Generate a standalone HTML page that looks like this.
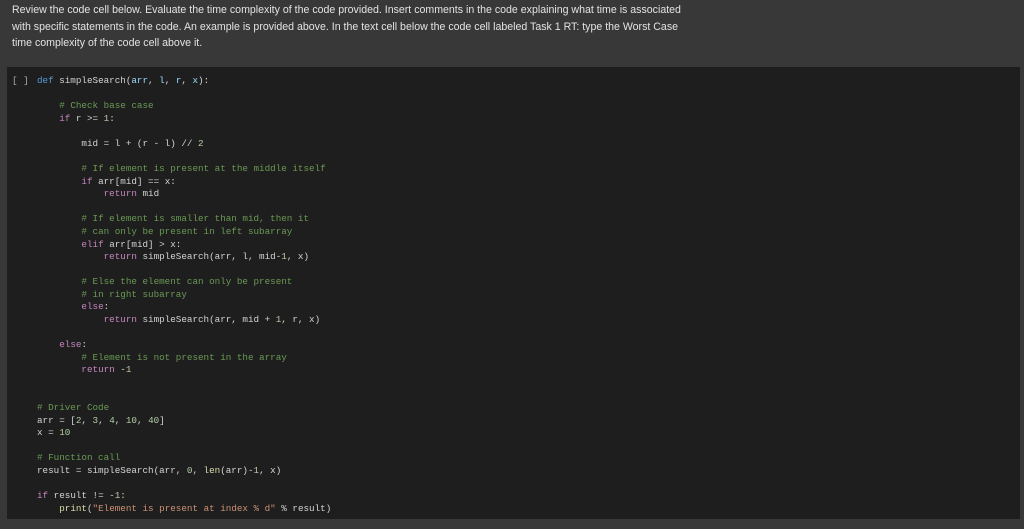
<!DOCTYPE html>
<html><head><style>
html,body{margin:0;padding:0;background:#383838;width:1024px;height:529px;overflow:hidden}
.t{position:absolute;left:12px;top:2px;font:10.6px/16.5px "Liberation Sans",sans-serif;color:#e3e3e3;white-space:nowrap}
.c{position:absolute;left:7px;top:67px;width:1013px;height:452px;background:#1e1e1e}
pre{position:absolute;left:30px;top:8px;margin:0;font:9.25px/12.58px "Liberation Mono",monospace;color:#d4d4d4}
.b{position:absolute;left:5px;top:8px;margin:0;font:9.25px/12.58px "Liberation Mono",monospace;color:#aaa}
.k{color:#569cd6}.p{color:#9cdcfe}.g{color:#6a9955}.m{color:#c586c0}.n{color:#b5cea8}.s{color:#ce9178}.f{color:#dcdcaa}
</style></head><body>
<div class="t">Review the code cell below. Evaluate the time complexity of the code provided. Insert comments in the code explaining what time is associated<br>with specific statements in the code. An example is provided above. In the text cell below the code cell labeled Task 1 RT: type the Worst Case<br>time complexity of the code cell above it.</div>
<div class="c">
<pre class="b">[ ]</pre>
<pre><span class="k">def</span> simpleSearch(<span class="p">arr</span>, <span class="p">l</span>, <span class="p">r</span>, <span class="p">x</span>):

    <span class="g"># Check base case</span>
    <span class="m">if</span> r &gt;= <span class="n">1</span>:

        mid = l + (r - l) // <span class="n">2</span>

        <span class="g"># If element is present at the middle itself</span>
        <span class="m">if</span> arr[mid] == x:
            <span class="m">return</span> mid

        <span class="g"># If element is smaller than mid, then it</span>
        <span class="g"># can only be present in left subarray</span>
        <span class="m">elif</span> arr[mid] &gt; x:
            <span class="m">return</span> simpleSearch(arr, l, mid-<span class="n">1</span>, x)

        <span class="g"># Else the element can only be present</span>
        <span class="g"># in right subarray</span>
        <span class="m">else</span>:
            <span class="m">return</span> simpleSearch(arr, mid + <span class="n">1</span>, r, x)

    <span class="m">else</span>:
        <span class="g"># Element is not present in the array</span>
        <span class="m">return</span> -<span class="n">1</span>


<span class="g"># Driver Code</span>
arr = [<span class="n">2</span>, <span class="n">3</span>, <span class="n">4</span>, <span class="n">10</span>, <span class="n">40</span>]
x = <span class="n">10</span>

<span class="g"># Function call</span>
result = simpleSearch(arr, <span class="n">0</span>, <span class="f">len</span>(arr)-<span class="n">1</span>, x)

<span class="m">if</span> result != -<span class="n">1</span>:
    <span class="f">print</span>(<span class="s">"Element is present at index % d"</span> % result)</pre>
</div>
</body></html>
